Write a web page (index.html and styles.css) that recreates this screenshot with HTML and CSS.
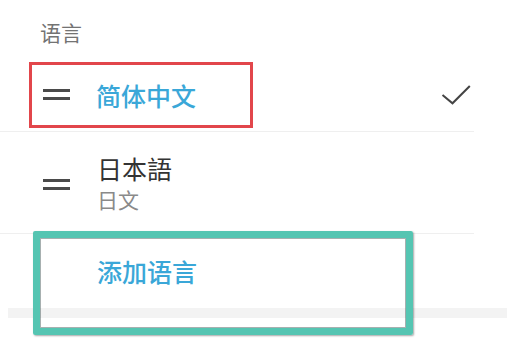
FILE: index.html
```
<!DOCTYPE html>
<html lang="zh">
<head>
<meta charset="utf-8">
<link rel="stylesheet" href="styles.css">
</head>
<body>
<div class="page">
  <div class="section-title">语言</div>
  <div class="list">
    <div class="row row-one">
      <span class="handle"></span>
      <span class="name name-active">简体中文</span>
      <svg class="check" width="32" height="22" viewBox="0 0 32 22">
        <path d="M2.5 11 L12.5 19.3 L29.8 2" fill="none" stroke="#444" stroke-width="2"/>
      </svg>
    </div>
    <div class="row row-two">
      <span class="handle"></span>
      <div class="texts">
        <div class="name">日本語</div>
        <div class="sub">日文</div>
      </div>
    </div>
    <div class="row row-add">
      <span class="add">添加语言</span>
    </div>
  </div>
  <div class="band"></div>
  <div class="mark mark-red"></div>
  <div class="mark mark-teal"></div>
</div>
</body>
</html>
```
FILE: styles.css
```
html, body {
  margin: 0;
  padding: 0;
  background: #ffffff;
}
body {
  font-family: "Noto Sans CJK SC", "Noto Sans", sans-serif;
}
.page {
  position: relative;
  width: 519px;
  height: 340px;
  overflow: hidden;
}
.section-title {
  box-sizing: border-box;
  height: 62px;
  padding: 20px 0 0 40px;
  font-size: 21px;
  line-height: 25px;
  color: #737373;
}
.list {
  width: 474px;
}
.row {
  display: flex;
  align-items: center;
  border-bottom: 1px solid #efefef;
}
.row-one {
  height: 69px;
}
.row-two {
  height: 101px;
}
.row-add {
  height: 74px;
  border-bottom: none;
}
.handle {
  box-sizing: border-box;
  width: 27px;
  height: 11px;
  margin-left: 43px;
  border-top: 3px solid #4a4a4a;
  border-bottom: 3px solid #4a4a4a;
}
.row-one .handle {
  margin-top: -4px;
}
.row-two .handle {
  margin-top: 3px;
}
.name {
  font-size: 25px;
  line-height: 28px;
  color: #333333;
}
.name-active {
  margin-left: 26px;
  margin-top: -3px;
  color: #3aa7d8;
  font-weight: 500;
}
.texts {
  margin-left: 27px;
  margin-top: 1px;
}
.sub {
  margin-top: 5px;
  font-size: 21px;
  line-height: 25px;
  color: #8a8a8a;
}
.check {
  margin-left: auto;
  margin-right: 2px;
  margin-top: -3px;
}
.add {
  margin-left: 97px;
  font-size: 25px;
  line-height: 30px;
  color: #3aa7d8;
  font-weight: 500;
}
.band {
  height: 10px;
  margin: 0 12px 0 8px;
  background: #f3f3f3;
}
.mark {
  position: absolute;
  box-sizing: border-box;
}
.mark-red {
  left: 29px;
  top: 62px;
  width: 224px;
  height: 66px;
  border: 3px solid #e2464b;
}
.mark-teal {
  left: 33px;
  top: 231px;
  width: 380px;
  height: 104px;
  border: 7px solid #55c5b2;
  border-radius: 2px;
  box-shadow: inset 0 0 0 1px rgba(60, 80, 80, 0.45), 1px 1px 2px rgba(0, 0, 0, 0.35);
}
```
